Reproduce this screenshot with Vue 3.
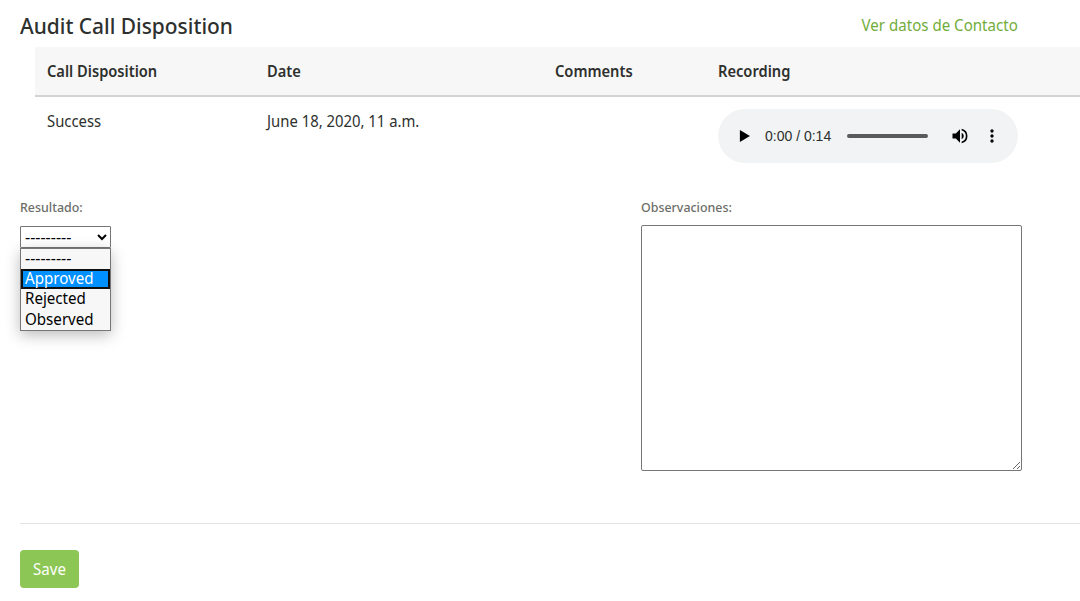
<script setup>
const columns = ['Call Disposition', 'Date', 'Comments', 'Recording']
const options = ['---------', 'Approved', 'Rejected', 'Observed']
</script>

<template>
  <main class="page">
    <header class="top">
      <h1><span class="fit">Audit Call Disposition</span></h1>
      <a class="contact fit">Ver datos de Contacto</a>
    </header>
    <section class="table">
      <div class="row head"><div v-for="c in columns" :key="c"><span class="fit">{{ c }}</span></div></div>
      <div class="row body">
        <div><span class="fit">Success</span></div>
        <div><span class="fit">June 18, 2020, 11 a.m.</span></div>
        <div></div>
        <div class="rec">
          <div class="player">
            <svg class="play" width="22" height="22" viewBox="0 0 24 24"><path d="M7.5 5.5v13l11-6.5z" /></svg>
            <span class="time">0:00 / 0:14</span>
            <i class="track"></i>
            <svg class="vol" width="20" height="20" viewBox="0 0 24 24"><path d="M3 9v6h4l5 5V4L7 9H3zm13.5 3A4.5 4.5 0 0 0 14 7.97v8.05A4.5 4.5 0 0 0 16.5 12zM14 3.23v2.06a7 7 0 0 1 0 13.42v2.06a9 9 0 0 0 0-17.54z" /></svg>
            <svg class="more" width="20" height="20" viewBox="0 0 24 24"><path d="M12 8a2 2 0 1 0 0-4 2 2 0 0 0 0 4zm0 2a2 2 0 1 0 0 4 2 2 0 0 0 0-4zm0 6a2 2 0 1 0 0 4 2 2 0 0 0 0-4z" /></svg>
          </div>
        </div>
      </div>
    </section>
    <section class="form">
      <div class="result">
        <label><span class="fit">Resultado:</span></label>
        <div class="select">
          <span>---------</span>
          <svg width="10" height="7" viewBox="0 0 10 7"><path d="M1 1l4 4 4-4" /></svg>
          <ul class="menu">
            <li v-for="(o, i) in options" :key="o" :class="{ active: i === 1 }"><span :class="{ fit: i > 0 }">{{ o }}</span></li>
          </ul>
        </div>
      </div>
      <div class="notes">
        <label><span class="fit">Observaciones:</span></label>
        <textarea></textarea>
      </div>
    </section>
    <hr />
    <button><span class="fit">Save</span></button>
  </main>
</template>

<style>
body { overflow: hidden; background: #fff; }
</style>

<style scoped>
* { box-sizing: border-box; }
.page { height: 601px; padding-left: 20px; font: 16px/24px "Noto Sans", sans-serif; color: #2d302d; overflow: hidden; }
.fit { display: inline-block; white-space: nowrap; transform: scaleX(0.928); transform-origin: 0 50%; }
.top { height: 47px; display: flex; justify-content: space-between; padding: 10px 62px 0 0; }
h1 { margin: 0; font-size: 22px; line-height: 30px; font-weight: 500; }
h1 .fit { transform: scaleX(0.95); }
.contact { color: #71ad3c; line-height: 30px; transform: scaleX(0.942); transform-origin: 100% 50%; }
.table { margin-left: 15px; }
.row { display: grid; grid-template-columns: 220px 288px 163px 1fr; padding-left: 12px; }
.head { height: 50px; background: #f7f7f7; border-bottom: 2px solid #d3d3d3; font-weight: 600; line-height: 48px; }
.head .fit { transform: scaleX(0.916); }
.body { height: 103px; padding-top: 12px; }
.player { width: 300px; height: 54px; border-radius: 27px; background: #f1f3f4; display: flex; align-items: center; padding-left: 15px; }
.time { font: 14px "Liberation Sans", sans-serif; width: 82px; margin-left: 10px; }
.track { width: 81px; height: 4px; border-radius: 2px; background: #5a5a5a; }
.vol { margin-left: 22px; }
.more { margin-left: 12px; }
.form { display: flex; height: 323px; }
.result { width: 621px; }
label { display: block; font-size: 13px; line-height: 14px; font-weight: 500; color: #6b6e69; height: 25px; }
label .fit { transform: scaleX(0.955); }
.select { position: relative; margin-top: 1px; width: 91px; height: 22px; border: 1px solid #767676; border-radius: 1px; color: #000; display: flex; align-items: center; justify-content: space-between; padding: 0 3px 0 4px; }
.select svg { fill: none; stroke: #000; stroke-width: 2; }
.menu { position: absolute; left: -1px; top: 21px; width: 91px; height: 83px; margin: 0; padding: 0; list-style: none; background: #f7f7f7; border: 1px solid #767676; box-shadow: 0 4px 14px #0004; }
.menu li { height: 20px; line-height: 20px; padding-left: 4px; }
.menu li:first-child { line-height: 18px; }
.menu li:nth-child(2), .menu li:nth-child(3) { line-height: 18px; }
.menu .fit { transform: scaleX(0.945); }
.menu .active { background: #0090ff; color: #fff; outline: 2px solid #101010; outline-offset: -2px; }
textarea { display: block; width: 381px; height: 246px; border: 1px solid #767676; border-radius: 2px; margin: 0; }
hr { margin: 0; border: 0; height: 1px; background: #e4e4e4; }
button { display: block; margin: 26px 0 0; width: 59px; height: 38px; border: 0; border-radius: 4px; background: #8cc654; color: #fff; font: inherit; padding: 0; }
button .fit { transform: scaleX(0.94); transform-origin: 50% 50%; }
</style>
